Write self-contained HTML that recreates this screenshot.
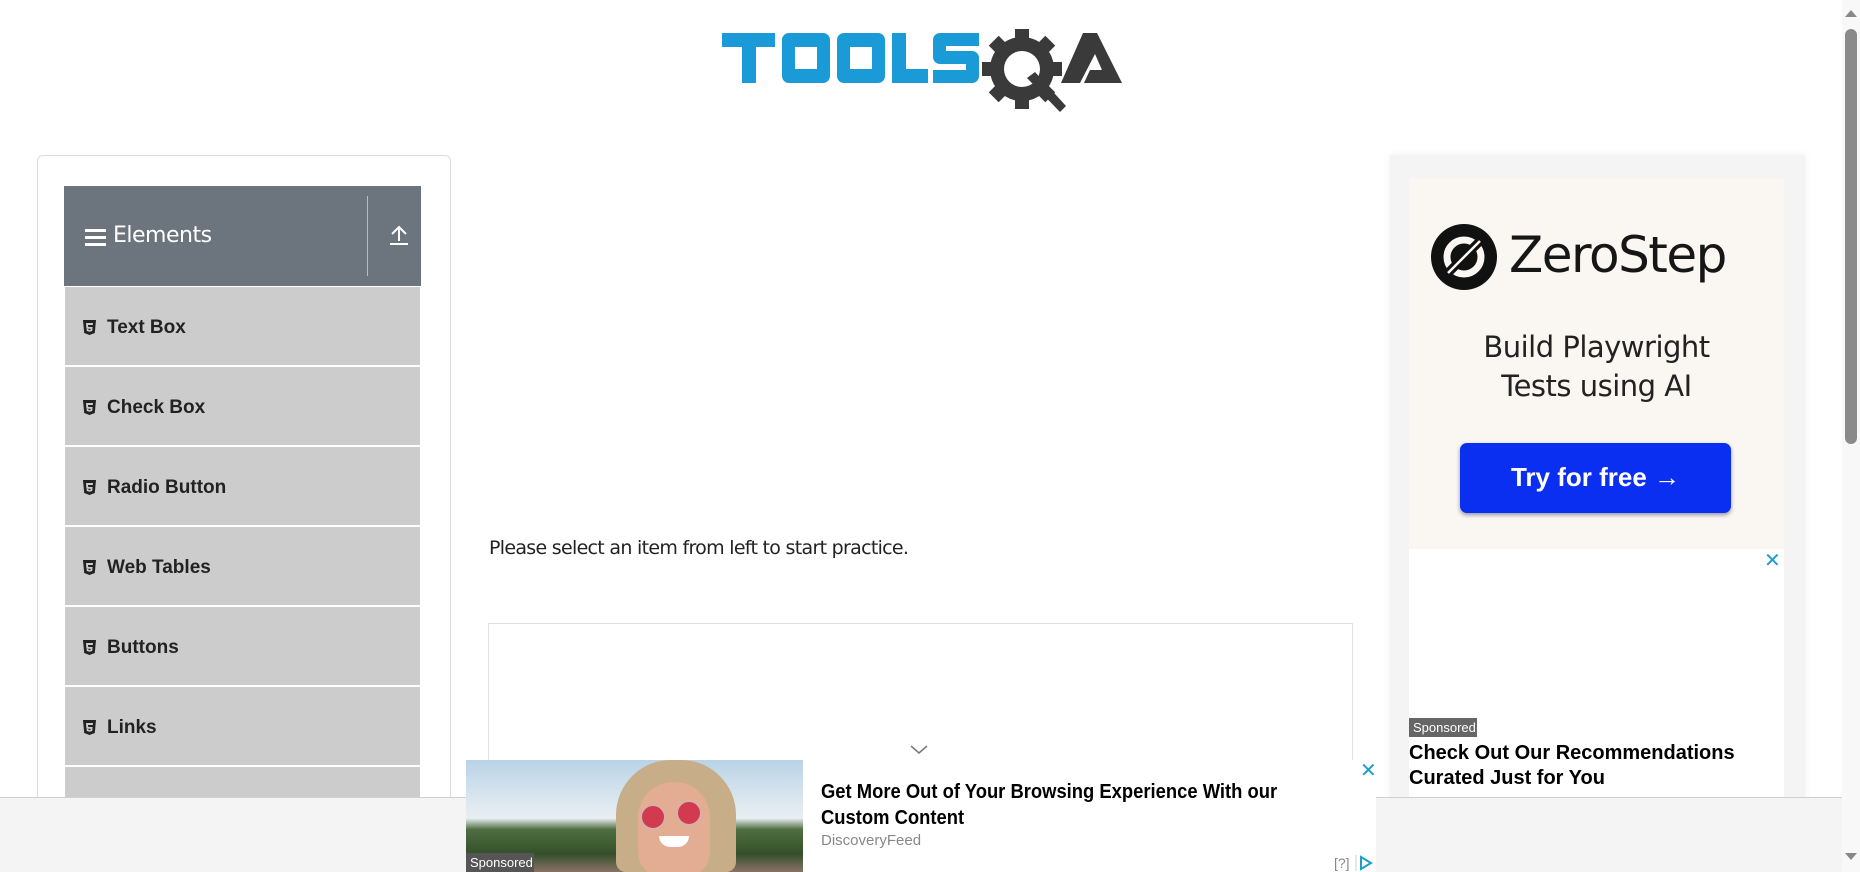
<!DOCTYPE html>
<html><head><meta charset="utf-8"><style>
*{box-sizing:border-box;margin:0;padding:0}
html,body{width:1860px;height:872px;overflow:hidden;background:#fff;font-family:"Liberation Sans",sans-serif;position:relative}
.abs{position:absolute}
.card{left:37px;top:155px;width:414px;height:717px;border:1px solid #dcdcdc;border-bottom:none;border-radius:6px 6px 0 0}
.hdr{left:64px;top:186px;width:357px;height:100px;background:#6c757d;color:#fff}
.item{position:absolute;left:65px;width:355px;height:78px;background:#ccc;font-weight:bold;font-size:19px;color:#222}
.item span.t{position:absolute;left:42px;top:30px}
.item svg{position:absolute;left:18px;top:33px}
</style></head><body>

<!-- logo -->
<svg class="abs" style="left:721px;top:20px" width="410" height="95" viewBox="0 0 410 95">
<g fill="#1a9ad6" fill-rule="evenodd">
<path d="M1 13h53v14H35v36H21V27H1z"/>
<path d="M68 13h34a7 7 0 0 1 7 7v36a7 7 0 0 1-7 7H68a7 7 0 0 1-7-7V20a7 7 0 0 1 7-7zM74 27v22h22V27z"/>
<path d="M123 13h34a7 7 0 0 1 7 7v36a7 7 0 0 1-7 7h-34a7 7 0 0 1-7-7V20a7 7 0 0 1 7-7zM129 27v22h22V27z"/>
<path d="M171 13h14v36h22v14h-36z"/>
<path d="M219 13h39v13h-33v5h26a7 7 0 0 1 7 7v18a7 7 0 0 1-7 7h-39V50h33v-6h-26a7 7 0 0 1-7-7V20a7 7 0 0 1 7-7z"/>
</g>
<g fill="#3a3a3a">
<circle cx="301" cy="49" r="32"/>
<g transform="translate(301 49)">
<rect x="-7" y="-40" width="14" height="12"/><rect x="-7" y="-40" width="14" height="12" transform="rotate(45)"/>
<rect x="-7" y="-40" width="14" height="12" transform="rotate(90)"/><rect x="-7" y="-40" width="14" height="12" transform="rotate(135)"/>
<rect x="-7" y="-40" width="14" height="12" transform="rotate(180)"/><rect x="-7" y="-40" width="14" height="12" transform="rotate(225)"/>
<rect x="-7" y="-40" width="14" height="12" transform="rotate(270)"/><rect x="-7" y="-40" width="14" height="12" transform="rotate(315)"/>
</g>
</g>
<circle cx="301" cy="49" r="18" fill="#fff"/>
<path d="M306 58l8-6 31 34-6 6z" fill="#3a3a3a"/>
<path d="M340 63l22-50h14l25 50h-38l6-13h12l-7-16-15 29z" fill="#3a3a3a"/>
</svg>

<!-- left card -->
<div class="abs card"></div>
<div class="abs hdr">
 <div class="abs" style="left:21px;top:43px;width:21px;height:17px">
  <div style="height:3px;background:#fff;margin-bottom:4px"></div><div style="height:3px;background:#fff;margin-bottom:4px"></div><div style="height:3px;background:#fff"></div></div>
 <div class="abs" style="left:49px;top:37px;font-size:22px;font-family:'DejaVu Sans','Liberation Sans',sans-serif;letter-spacing:-0.5px">Elements</div>
 <div class="abs" style="left:303px;top:10px;width:1px;height:80px;background:#b8bcc0"></div>
 <svg class="abs" style="left:325px;top:38px" width="20" height="22"><path d="M10 3v14M3 10l7-7 7 7" stroke="#fff" stroke-width="2" fill="none"/><path d="M1 20h18" stroke="#fff" stroke-width="2"/></svg>
</div>

<div class="item" style="top:287px"><svg width="13" height="15" viewBox="0 0 13 15"><path d="M0 0h13l-1.2 13L6.5 15 1.2 13z" fill="#222"/><path d="M3 3h7l-.2 2H5l.2 2h4.4l-.4 4-2.7.8-2.7-.8-.2-2h1.8l.1 .9 1 .3 1-.3.1-1.2H3.4z" fill="#ccc"/></svg><span class="t">Text Box</span></div>
<div class="item" style="top:367px"><svg width="13" height="15" viewBox="0 0 13 15"><path d="M0 0h13l-1.2 13L6.5 15 1.2 13z" fill="#222"/><path d="M3 3h7l-.2 2H5l.2 2h4.4l-.4 4-2.7.8-2.7-.8-.2-2h1.8l.1 .9 1 .3 1-.3.1-1.2H3.4z" fill="#ccc"/></svg><span class="t">Check Box</span></div>
<div class="item" style="top:447px"><svg width="13" height="15" viewBox="0 0 13 15"><path d="M0 0h13l-1.2 13L6.5 15 1.2 13z" fill="#222"/><path d="M3 3h7l-.2 2H5l.2 2h4.4l-.4 4-2.7.8-2.7-.8-.2-2h1.8l.1 .9 1 .3 1-.3.1-1.2H3.4z" fill="#ccc"/></svg><span class="t">Radio Button</span></div>
<div class="item" style="top:527px"><svg width="13" height="15" viewBox="0 0 13 15"><path d="M0 0h13l-1.2 13L6.5 15 1.2 13z" fill="#222"/><path d="M3 3h7l-.2 2H5l.2 2h4.4l-.4 4-2.7.8-2.7-.8-.2-2h1.8l.1 .9 1 .3 1-.3.1-1.2H3.4z" fill="#ccc"/></svg><span class="t">Web Tables</span></div>
<div class="item" style="top:607px"><svg width="13" height="15" viewBox="0 0 13 15"><path d="M0 0h13l-1.2 13L6.5 15 1.2 13z" fill="#222"/><path d="M3 3h7l-.2 2H5l.2 2h4.4l-.4 4-2.7.8-2.7-.8-.2-2h1.8l.1 .9 1 .3 1-.3.1-1.2H3.4z" fill="#ccc"/></svg><span class="t">Buttons</span></div>
<div class="item" style="top:687px"><svg width="13" height="15" viewBox="0 0 13 15"><path d="M0 0h13l-1.2 13L6.5 15 1.2 13z" fill="#222"/><path d="M3 3h7l-.2 2H5l.2 2h4.4l-.4 4-2.7.8-2.7-.8-.2-2h1.8l.1 .9 1 .3 1-.3.1-1.2H3.4z" fill="#ccc"/></svg><span class="t">Links</span></div>
<div class="item" style="top:767px;height:105px"></div>

<!-- center -->
<div class="abs" style="left:489px;top:537px;font-size:19px;color:#222;font-family:'DejaVu Sans','Liberation Sans',sans-serif;letter-spacing:-0.7px">Please select an item from left to start practice.</div>
<div class="abs" style="left:488px;top:623px;width:865px;height:249px;border:1px solid #e0e0e0;border-bottom:none"></div>
<svg class="abs" style="left:909px;top:744px" width="20" height="12"><path d="M2 2l8 7 8-7" stroke="#777" stroke-width="1.5" fill="none"/></svg>

<!-- right ad -->
<div class="abs" style="left:1390px;top:155px;width:415px;height:717px;background:#f4f4f4;box-shadow:0 0 8px rgba(0,0,0,.06)"></div>
<div class="abs" style="left:1409px;top:178px;width:375px;height:371px;background:#faf6f1">
 <svg class="abs" style="left:21px;top:45px" width="68" height="68" viewBox="0 0 68 68"><circle cx="34" cy="34" r="33" fill="#111"/><circle cx="34" cy="34" r="17" fill="none" stroke="#faf6f1" stroke-width="7"/><path d="M16 52L52 16" stroke="#111" stroke-width="9"/><path d="M18 50L50 18" stroke="#faf6f1" stroke-width="2.5"/></svg>
 <div class="abs" style="left:100px;top:48px;font-size:50px;color:#161616;font-family:'DejaVu Sans','Liberation Sans',sans-serif;letter-spacing:-1.5px">ZeroStep</div>
 <div class="abs" style="left:0;top:150px;width:375px;text-align:center;font-size:29px;line-height:39px;color:#222;font-family:'DejaVu Sans','Liberation Sans',sans-serif;letter-spacing:-0.5px">Build Playwright<br>Tests using AI</div>
 <div class="abs" style="left:51px;top:265px;width:271px;height:70px;background:#0b2ff0;border-radius:7px;box-shadow:0 2px 4px rgba(0,0,60,.4);color:#fff;font-weight:bold;font-size:26px;text-align:center;line-height:68px">Try for free →</div>
</div>
<div class="abs" style="left:1409px;top:549px;width:375px;height:323px;background:#fff"></div>
<div class="abs" style="left:1764px;top:548px;color:#1aa0c8;font-size:20px">✕</div>
<div class="abs" style="left:1409px;top:718px;width:68px;height:19px;background:#666;color:#fff;font-size:13px;line-height:19px;padding-left:4px">Sponsored</div>
<div class="abs" style="left:1409px;top:741px;font-size:20px;font-weight:bold;color:#000;line-height:25px">Check Out Our Recommendations<br>Curated Just for You</div>

<!-- bottom bar -->
<div class="abs" style="left:0;top:797px;width:1842px;height:75px;background:#f4f4f4;border-top:1px solid #d0d0d0"></div>
<div class="abs" style="left:466px;top:760px;width:910px;height:112px;background:#fff"></div>
<div class="abs" style="left:466px;top:760px;width:337px;height:112px;overflow:hidden;background:linear-gradient(#b9d3e6 0%,#dfe9f0 40%,#e8eef2 52%,#4f6e40 62%,#34502c 84%,#8a7266 100%)">
 <div class="abs" style="left:150px;top:0;width:120px;height:112px;background:#c7ad88;border-radius:55px 55px 10px 10px"></div>
 <div class="abs" style="left:172px;top:22px;width:72px;height:95px;background:#e2ad92;border-radius:35px 35px 25px 25px"></div>
 <div class="abs" style="left:174px;top:44px;width:26px;height:26px;border-radius:50%;background:#d23a50;border:2px solid #d9b0a8"></div>
 <div class="abs" style="left:210px;top:40px;width:26px;height:26px;border-radius:50%;background:#d23a50;border:2px solid #d9b0a8"></div>
 <div class="abs" style="left:193px;top:76px;width:30px;height:11px;border-radius:0 0 15px 15px;background:#fff"></div>
 <div class="abs" style="left:0;top:93px;width:68px;height:19px;background:#555;color:#fff;font-size:13px;line-height:19px;padding-left:4px">Sponsored</div>
</div>
<div class="abs" style="left:821px;top:779px;font-size:20px;font-weight:bold;color:#000;line-height:26px;transform:scaleX(0.92);transform-origin:left">Get More Out of Your Browsing Experience With our<br>Custom Content</div>
<div class="abs" style="left:821px;top:832px;font-size:15px;color:#888">DiscoveryFeed</div>
<div class="abs" style="left:1360px;top:758px;color:#1aa0c8;font-size:20px">✕</div>
<div class="abs" style="left:1334px;top:855px;color:#888;font-size:14px">[?]</div>
<svg class="abs" style="left:1355px;top:855px" width="20" height="16"><path d="M1 0v16" stroke="#ccc"/><path d="M6 2l10 6-10 6z" stroke="#1aa0c8" stroke-width="2" fill="none"/></svg>

<!-- scrollbar -->
<div class="abs" style="left:1842px;top:0;width:18px;height:872px;background:#f8f8f8"></div>
<div class="abs" style="left:1845px;top:29px;width:12px;height:415px;background:#8a8a8a;border-radius:6px"></div>
<svg class="abs" style="left:1844px;top:8px" width="14" height="10"><path d="M1 9L7 2l6 7z" fill="#888"/></svg>
<svg class="abs" style="left:1844px;top:852px" width="14" height="10"><path d="M1 1L7 8l6-7z" fill="#888"/></svg>
</body></html>
